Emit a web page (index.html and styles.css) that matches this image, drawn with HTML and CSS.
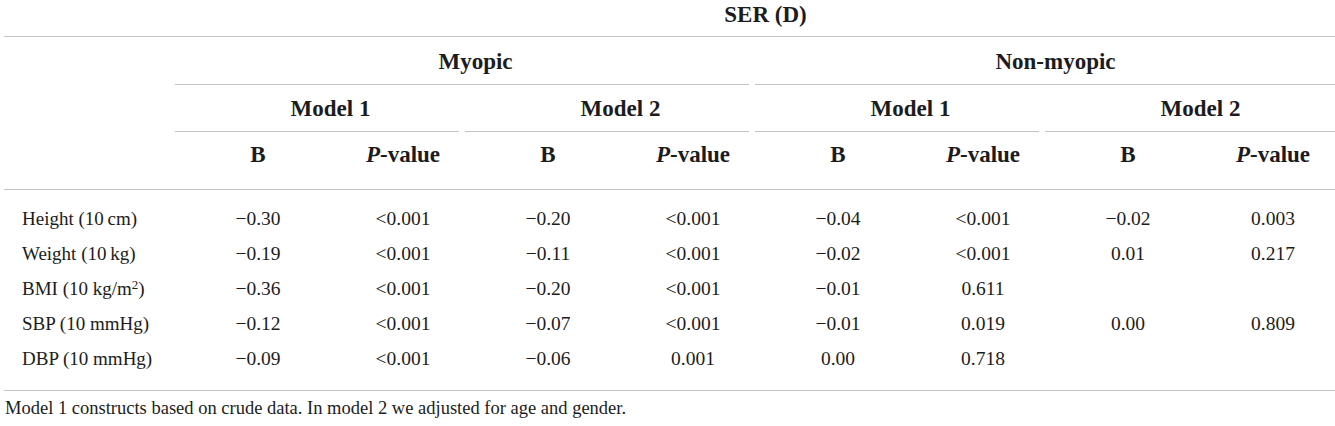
FILE: index.html
```html
<!DOCTYPE html>
<html lang="en">
<head>
<meta charset="utf-8">
<title>SER (D) table</title>
<link rel="stylesheet" href="styles.css">
</head>
<body>
<div class="table">
  <div class="label-empty"></div>
  <div class="title hcell">SER (D)</div>
  <div class="rule"></div>

  <div class="label-empty"></div>
  <div class="grp hcell seg span4">Myopic</div>
  <div class="grp hcell seg-last span4">Non-myopic</div>

  <div class="label-empty"></div>
  <div class="model hcell seg span2">Model 1</div>
  <div class="model hcell seg span2">Model 2</div>
  <div class="model hcell seg span2">Model 1</div>
  <div class="model hcell seg-last span2">Model 2</div>

  <div class="label-empty"></div>
  <div class="sub hcell">B</div>
  <div class="sub hcell"><i>P</i>-value</div>
  <div class="sub hcell">B</div>
  <div class="sub hcell"><i>P</i>-value</div>
  <div class="sub hcell">B</div>
  <div class="sub hcell"><i>P</i>-value</div>
  <div class="sub hcell">B</div>
  <div class="sub hcell"><i>P</i>-value</div>
  <div class="rule"></div>

  <div class="spacer-top"></div>

  <div class="label">Height (10&#8201;cm)</div>
  <div class="cell">&minus;0.30</div><div class="cell">&lt;0.001</div>
  <div class="cell">&minus;0.20</div><div class="cell">&lt;0.001</div>
  <div class="cell">&minus;0.04</div><div class="cell">&lt;0.001</div>
  <div class="cell">&minus;0.02</div><div class="cell">0.003</div>

  <div class="label">Weight (10&#8201;kg)</div>
  <div class="cell">&minus;0.19</div><div class="cell">&lt;0.001</div>
  <div class="cell">&minus;0.11</div><div class="cell">&lt;0.001</div>
  <div class="cell">&minus;0.02</div><div class="cell">&lt;0.001</div>
  <div class="cell">0.01</div><div class="cell">0.217</div>

  <div class="label">BMI (10 kg/m<sup>2</sup>)</div>
  <div class="cell">&minus;0.36</div><div class="cell">&lt;0.001</div>
  <div class="cell">&minus;0.20</div><div class="cell">&lt;0.001</div>
  <div class="cell">&minus;0.01</div><div class="cell">0.611</div>
  <div class="cell"></div><div class="cell"></div>

  <div class="label">SBP (10 mmHg)</div>
  <div class="cell">&minus;0.12</div><div class="cell">&lt;0.001</div>
  <div class="cell">&minus;0.07</div><div class="cell">&lt;0.001</div>
  <div class="cell">&minus;0.01</div><div class="cell">0.019</div>
  <div class="cell">0.00</div><div class="cell">0.809</div>

  <div class="label">DBP (10 mmHg)</div>
  <div class="cell">&minus;0.09</div><div class="cell">&lt;0.001</div>
  <div class="cell">&minus;0.06</div><div class="cell">0.001</div>
  <div class="cell">0.00</div><div class="cell">0.718</div>
  <div class="cell"></div><div class="cell"></div>

  <div class="spacer-bottom"></div>
  <div class="rule"></div>

  <div class="footer">Model 1 constructs based on crude data. In model 2 we adjusted for age and gender.</div>
</div>
</body>
</html>
```
FILE: styles.css
```css
html, body {
  margin: 0;
  padding: 0;
  background: #ffffff;
  overflow: hidden;
}

body {
  font-family: "Liberation Serif", "Times New Roman", serif;
  color: #1c1c1c;
}

.table {
  display: grid;
  grid-template-columns: 175px repeat(8, 145px);
  width: 1335px;
}

.hcell {
  font-weight: bold;
  font-size: 23px;
  line-height: 26px;
  text-align: center;
  padding-left: 21px;
}

.title {
  grid-column: 2 / -1;
  height: 36px;
  line-height: 30px;
}

.rule {
  grid-column: 1 / -1;
  height: 1px;
  margin-left: 4px;
  background: #c4c4c4;
}

.span4 { grid-column: span 4; }
.span2 { grid-column: span 2; }

.seg {
  background: linear-gradient(#c4c4c4, #c4c4c4) no-repeat left bottom / calc(100% - 6px) 1px;
}

.seg-last {
  background: linear-gradient(#c4c4c4, #c4c4c4) no-repeat left bottom / 100% 1px;
}

.grp {
  padding-top: 12px;
  padding-bottom: 10px;
}

.model {
  padding-top: 11px;
  padding-bottom: 10px;
}

.sub {
  padding-top: 10px;
  padding-bottom: 21px;
}

.spacer-top {
  grid-column: 1 / -1;
  height: 11px;
}

.spacer-bottom {
  grid-column: 1 / -1;
  height: 14px;
}

.label {
  font-size: 19px;
  line-height: 35px;
  padding-left: 22px;
  white-space: nowrap;
}

.cell {
  font-size: 19.5px;
  line-height: 35px;
  text-align: center;
  padding-left: 21px;
  white-space: nowrap;
}

sup {
  font-size: 0.68em;
  line-height: 0;
  vertical-align: 0.5em;
}

.footer {
  grid-column: 1 / -1;
  font-size: 18.5px;
  line-height: 24px;
  padding-top: 5px;
  padding-left: 5px;
  white-space: nowrap;
}
```
